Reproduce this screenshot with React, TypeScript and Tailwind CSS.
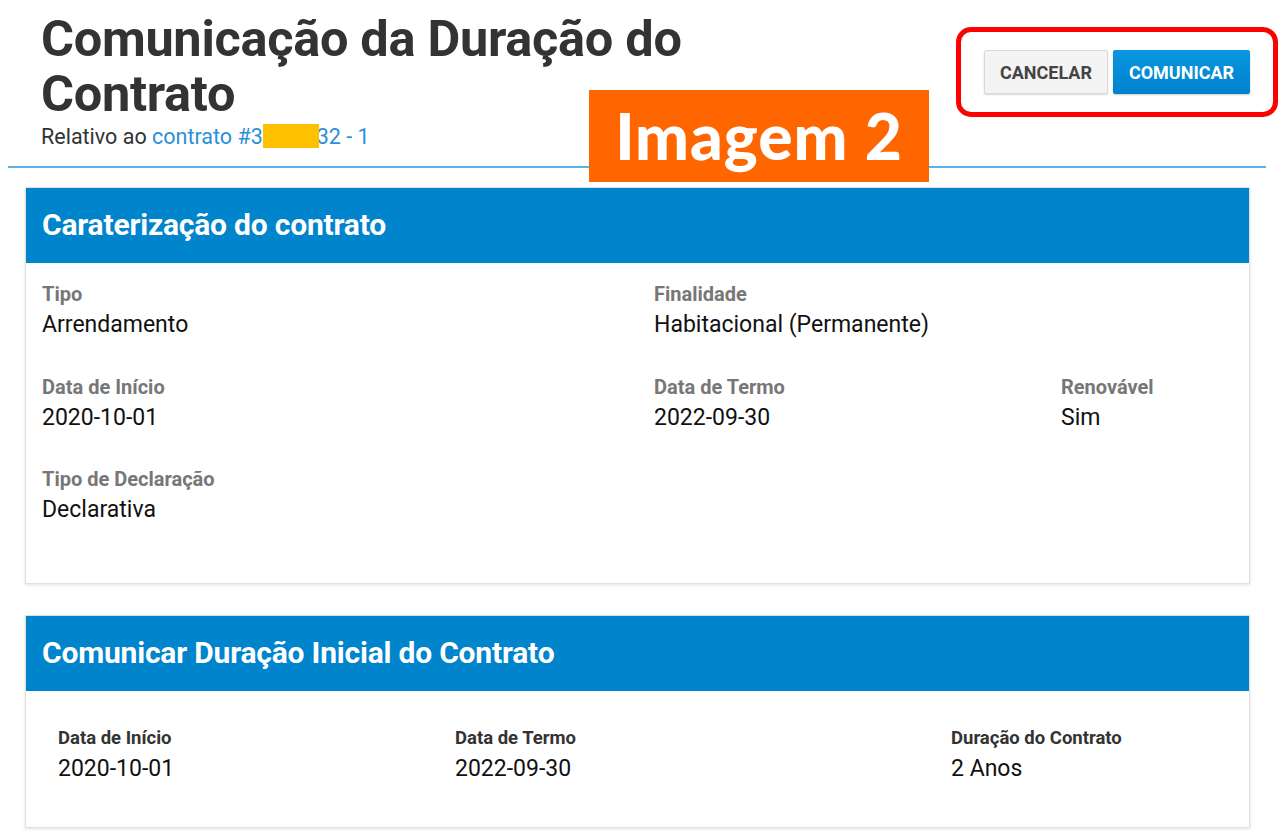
import React from "react";

const FONT = { fontFamily: "Roboto, 'Liberation Sans', sans-serif" };

type Field = { label: string; value: string };

const FieldBlock: React.FC<Field & { labelClass: string }> = ({ label, value, labelClass }) => (
  <div>
    <div className={`font-bold leading-[22px] ${labelClass}`}>{label}</div>
    <div className="text-[23px] leading-[30px] text-[#111] mt-[5px]">{value}</div>
  </div>
);

const Card: React.FC<{ title: string; children: React.ReactNode; className?: string }> = ({
  title,
  children,
  className,
}) => (
  <section
    className={`ml-[25px] w-[1225px] border border-[#e0e0e0] bg-white shadow-[0_1px_3px_rgba(0,0,0,0.12)] ${className ?? ""}`}
  >
    <div className="h-[75px] bg-[#0084cc] flex items-center px-[16px] pb-[3px]">
      <h2 className="text-[30px] font-bold text-white tracking-[-0.2px]">{title}</h2>
    </div>
    {children}
  </section>
);

export default function App() {
  const rows: Field[][] = [
    [
      { label: "Tipo", value: "Arrendamento" },
      { label: "Finalidade", value: "Habitacional (Permanente)" },
    ],
    [
      { label: "Data de Início", value: "2020-10-01" },
      { label: "Data de Termo", value: "2022-09-30" },
      { label: "Renovável", value: "Sim" },
    ],
    [{ label: "Tipo de Declaração", value: "Declarativa" }],
  ];

  return (
    <div className="w-[1280px] h-[837px] bg-white overflow-hidden" style={FONT}>
      {/* Page header */}
      <header className="relative h-[168px]">
        <div className="pl-[41px] pt-[11px]">
          <h1 className="text-[50.5px] font-bold leading-[55px] text-[#333] w-[700px] tracking-[-0.3px]">
            Comunicação da Duração do Contrato
          </h1>
          <p className="text-[21.5px] leading-[28px] text-[#333] mt-[2px]">
            Relativo ao{" "}
            <span className="text-[#2b8fd8]">
              contrato #3
              <span className="relative inline-block w-[54px]">
                <span className="invisible">0</span>
                <span className="absolute left-[0px] top-[1px] w-[56px] h-[24px] bg-[#ffc000]" />
              </span>
              32 - 1
            </span>
          </p>
        </div>
        <div className="absolute left-[8px] right-[14px] bottom-0 h-[2px] bg-[#5cb3e8]" />

        {/* annotation label */}
        <div className="absolute left-[589px] top-[90px] w-[340px] h-[92px] bg-[#ff6600] flex items-center justify-center">
          <span
            className="text-white text-[64px] font-black tracking-[1px] leading-none"
            style={{ fontFamily: "Lato, 'Open Sans', sans-serif" }}
          >
            Imagem 2
          </span>
        </div>

        {/* actions, outlined in red */}
        <div className="absolute left-[956px] top-[27px] w-[322px] h-[90px] border-[5px] border-[#ff0000] rounded-[15px] flex items-center pl-[23px] gap-[5px]">
          <button className="h-[44px] w-[124px] bg-[#f4f4f4] border border-[#d8d8d8] rounded-[2px] shadow-[0_1px_2px_rgba(0,0,0,0.15)] text-[18px] font-bold text-[#444]">
            CANCELAR
          </button>
          <button className="h-[44px] w-[137px] bg-gradient-to-b from-[#0a96e0] to-[#0082cc] rounded-[2px] shadow-[0_1px_2px_rgba(0,0,0,0.2)] text-[18px] font-bold text-white">
            COMUNICAR
          </button>
        </div>
      </header>

      <Card title="Caraterização do contrato" className="mt-[19px] h-[397px]">
        <div className="px-[16px] pt-[20px] flex flex-col gap-[35.5px]">
          {rows.map((row, i) => (
            <div key={i} className="grid grid-cols-[612px_407px_1fr]">
              {row.map((f) => (
                <FieldBlock key={f.label} {...f} labelClass="text-[20px] text-[#777]" />
              ))}
            </div>
          ))}
        </div>
      </Card>

      <Card title="Comunicar Duração Inicial do Contrato" className="mt-[31px] h-[213px]">
        <div className="px-[32px] pt-[36px] grid grid-cols-[397px_496px_1fr]">
          <FieldBlock label="Data de Início" value="2020-10-01" labelClass="text-[18.5px] text-[#333]" />
          <FieldBlock label="Data de Termo" value="2022-09-30" labelClass="text-[18.5px] text-[#333]" />
          <FieldBlock label="Duração do Contrato" value="2 Anos" labelClass="text-[18.5px] text-[#333]" />
        </div>
      </Card>
    </div>
  );
}
